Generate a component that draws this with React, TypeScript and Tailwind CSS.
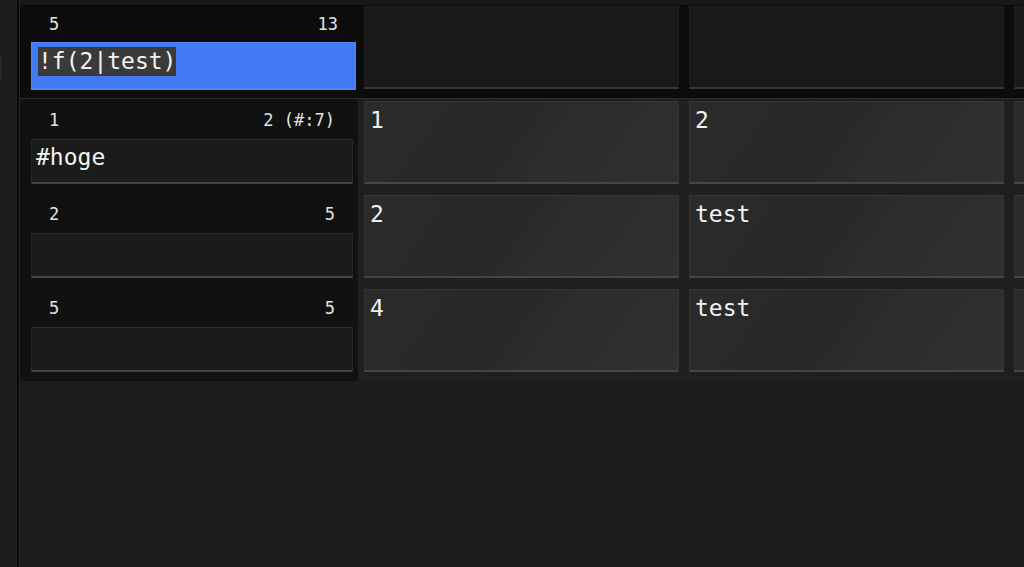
const mono = "font-['DejaVu_Sans_Mono','Liberation_Mono',monospace]";

interface Row {
  from: string;
  to: string;
  expr: string;
  values: string[];
}

const rows: Row[] = [
  { from: "1", to: "2 (#:7)", expr: "#hoge", values: ["1", "2", ""] },
  { from: "2", to: "5", expr: "", values: ["2", "test", ""] },
  { from: "5", to: "5", expr: "", values: ["4", "test", ""] },
];

const Label = ({ left, right }: { left: string; right: string }) => (
  <div className="flex items-center justify-between px-[18px] text-[17px] leading-none text-[#e2e2e2]">
    <span>{left}</span>
    <span className="whitespace-pre">{right}</span>
  </div>
);

const ValueCell = ({ text }: { text: string }) => (
  <div className="w-[315px] h-[83px] shrink-0 bg-[linear-gradient(125deg,#2b2b2b,#282828_45%,#2d2d2d_60%,#303030)] border border-[#353535] border-b-2 border-b-[#464646] px-[5px] pt-[4px] text-[23px] leading-[29px] text-[#f2f2f2]">
    {text}
  </div>
);

export default function App() {
  return (
    <div className={`w-[1024px] h-[567px] flex overflow-hidden bg-[#1c1c1c] ${mono}`}>
      {/* sidebar */}
      <div className="w-[17px] shrink-0 bg-[#1d1d1d] relative">
        <div className="absolute left-0 top-[55px] w-[2px] h-[27px] rounded-r bg-[#282828]" />
      </div>
      <div className="w-[2px] shrink-0 bg-[#090909]" />

      <div className="flex-1 min-w-0 flex flex-col border-l border-[#2a2a2a]">
        {/* top bar */}
        <div className="h-[6px] shrink-0 bg-[#181818] border-b border-[#0a0a0a]" />

        {/* editing row */}
        <div className="h-[92px] shrink-0 flex items-start bg-[#0c0c0c]">
          <div className="w-[338px] shrink-0 pl-[11px] pr-[2px]">
            <div className="h-[36px] flex items-center">
              <div className="w-full">
                <Label left="5" right="13" />
              </div>
            </div>
            <div className="h-[48px] bg-[#437af3] border border-[#5385f4] border-b-2 px-[6px] pt-[4px]">
              <span className="inline-block bg-[#3a3a3a] text-[23px] leading-[29px] text-[#f2f2f2]">!f(2|test)</span>
            </div>
          </div>
          <div className="flex gap-[10px] ml-[6px]">
            {[0, 1, 2].map((i) => (
              <div key={i} className="w-[315px] h-[83px] shrink-0 bg-[#191919] border border-[#1f1f1f] border-b-2 border-b-[#363636]" />
            ))}
          </div>
        </div>

        {/* rows */}
        <div className="shrink-0 border-t border-[#2c2c2c] bg-[linear-gradient(to_right,#111111_338px,#1f1f1f_338px)] pt-[2px] pb-[9px] flex flex-col gap-[11px]">
          {rows.map((r, idx) => (
            <div key={idx} className="flex h-[83px]">
              <div className="w-[338px] shrink-0 pl-[11px] pr-[5px] flex flex-col">
                <div className="h-[38px] flex items-center">
                  <div className="w-full">
                    <Label left={r.from} right={r.to} />
                  </div>
                </div>
                <div className="h-[45px] bg-[#1b1b1b] border border-[#262626] border-t-[#2c2c2c] border-b-2 border-b-[#444444] px-[4px] pt-[3px] text-[23px] leading-[29px] text-[#f2f2f2]">
                  {r.expr}
                </div>
              </div>
              <div className="flex gap-[10px] ml-[6px]">
                {r.values.map((v, j) => (
                  <ValueCell key={j} text={v} />
                ))}
              </div>
            </div>
          ))}
        </div>

        <div className="flex-1 bg-[#1c1c1c]" />
      </div>
    </div>
  );
}
